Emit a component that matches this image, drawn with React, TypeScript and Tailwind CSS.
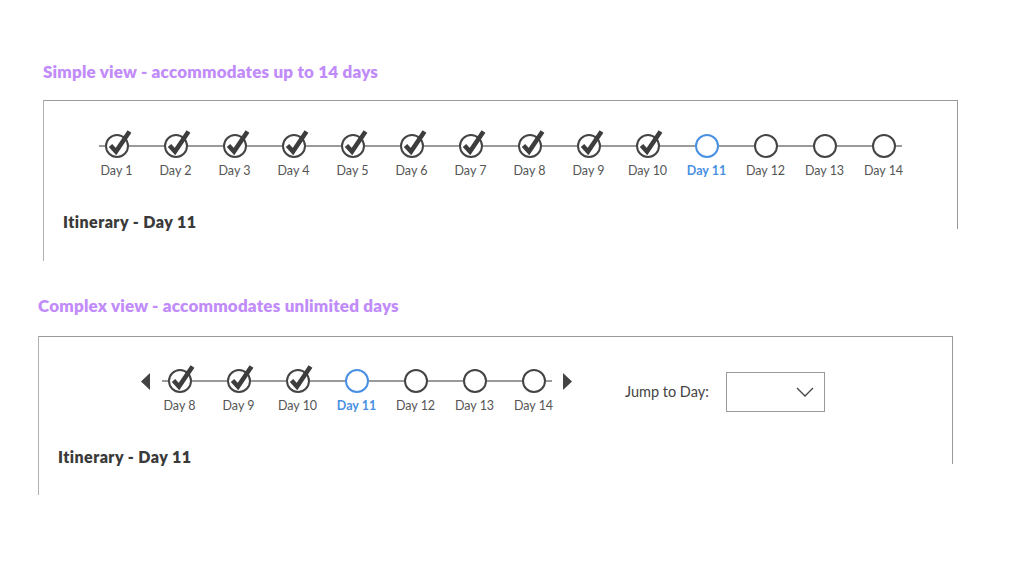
import React from "react";

type DayState = "done" | "current" | "todo";

const font = { fontFamily: "Lato, 'Open Sans', sans-serif" };

/* ---------- node drawings ---------- */
const Node = ({ state }: { state: DayState }) => (
  <svg width="24" height="24" viewBox="0 0 24 24" className="shrink-0 overflow-visible">
    <circle
      cx="12"
      cy="12"
      r="11"
      fill="white"
      stroke={state === "current" ? "#4a90e2" : "#444444"}
      strokeWidth="2"
    />
    {state === "done" && (
      <path
        d="M5.5 11.5 L11 17.5 L24.5 -2.5"
        fill="none"
        stroke="#3d3d3d"
        strokeWidth="4.6"
        strokeLinejoin="miter"
      />
    )}
  </svg>
);

const Line = ({ className = "" }: { className?: string }) => (
  <div className={`h-[2px] bg-[#9a9a9a] ${className}`} />
);

interface DayItemProps {
  day: number;
  state: DayState;
  first: boolean;
  last: boolean;
}

const DayItem = ({ day, state, first, last }: DayItemProps) => (
  <div className="flex w-[59px] shrink-0 flex-col items-center">
    <div className="flex h-6 w-full items-center">
      {first ? (
        <div className="flex flex-1 justify-end">
          <Line className="w-[6px]" />
        </div>
      ) : (
        <Line className="flex-1" />
      )}
      <Node state={state} />
      {last ? (
        <div className="flex flex-1 justify-start">
          <Line className="w-[6px]" />
        </div>
      ) : (
        <Line className="flex-1" />
      )}
    </div>
    <span
      className={`mt-[5px] text-[12.5px] leading-4 whitespace-nowrap ${
        state === "current" ? "font-bold text-[#4a90e2]" : "text-[#555555]"
      }`}
    >
      Day {day}
    </span>
  </div>
);

const Timeline = ({ from, to, current }: { from: number; to: number; current: number }) => {
  const days = [];
  for (let d = from; d <= to; d++) days.push(d);
  return (
    <div className="flex items-start">
      {days.map((d, i) => (
        <DayItem
          key={d}
          day={d}
          state={d < current ? "done" : d === current ? "current" : "todo"}
          first={i === 0}
          last={i === days.length - 1}
        />
      ))}
    </div>
  );
};

const Arrow = ({ dir }: { dir: "left" | "right" }) => (
  <svg width="9" height="17" viewBox="0 0 9 17" className="mt-[4px] shrink-0">
    <path d={dir === "left" ? "M9 0 L0 8.5 L9 17 Z" : "M0 0 L9 8.5 L0 17 Z"} fill="#444444" />
  </svg>
);

const SectionTitle = ({ children }: { children: React.ReactNode }) => (
  <h2 className="text-[17px] leading-5 font-extrabold tracking-[0.2px] text-[#c18cf9]">
    {children}
  </h2>
);

const Itinerary = () => (
  <p className="text-[16px] leading-5 font-extrabold tracking-[0.45px] text-[#3a3a3a]">
    Itinerary - Day 11
  </p>
);

export default function App() {
  return (
    <div className="h-[561px] w-[1024px] overflow-hidden bg-white" style={font}>
      {/* ---------------- SIMPLE VIEW ---------------- */}
      <div className="ml-[43px] w-[915px] pt-[62px]">
        <SectionTitle>Simple view - accommodates up to 14 days</SectionTitle>
        <div className="mt-[18px] h-[161px] border-l border-[#b0b0b0]">
          <div className="h-[129px] border-t border-r border-[#999999] pt-[33px]">
            <div className="pl-[43px]">
              <Timeline from={1} to={14} current={11} />
            </div>
            <div className="mt-[33px] pl-[19px]">
              <Itinerary />
            </div>
          </div>
        </div>
      </div>

      {/* ---------------- COMPLEX VIEW ---------------- */}
      <div className="ml-[38px] w-[915px] pt-[35px]">
        <SectionTitle>Complex view - accommodates unlimited days</SectionTitle>
        <div className="mt-[20px] h-[159px] border-l border-[#b0b0b0]">
          <div className="h-[128px] border-t border-r border-[#999999] pt-[32px]">
            <div className="flex items-start pl-[102px]">
              <Arrow dir="left" />
              <Timeline from={8} to={14} current={11} />
              <Arrow dir="right" />
              <div className="ml-[53px] mt-[3px] flex items-center">
                <span className="text-[14.5px] text-[#444444]">Jump to Day:</span>
                <button
                  type="button"
                  className="ml-[17px] flex h-10 w-[99px] items-center justify-end border border-[#999999] bg-white pr-[10px]"
                >
                  <svg width="18" height="10" viewBox="0 0 18 10">
                    <path d="M1 1 L9 9 L17 1" fill="none" stroke="#444444" strokeWidth="1.3" />
                  </svg>
                </button>
              </div>
            </div>
            <div className="mt-[33px] pl-[19px]">
              <Itinerary />
            </div>
          </div>
        </div>
      </div>
    </div>
  );
}
